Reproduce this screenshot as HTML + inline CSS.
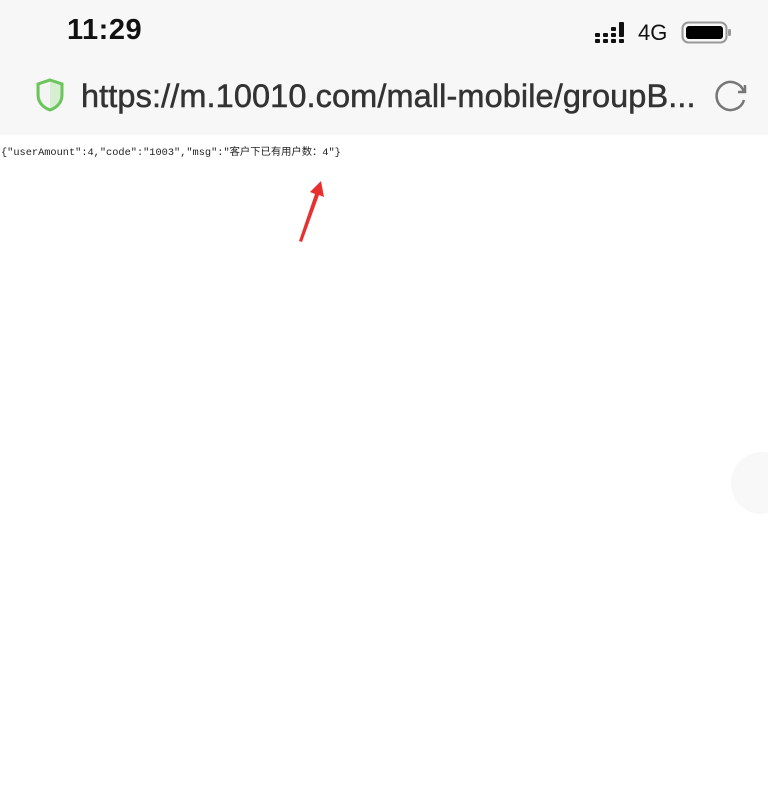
<!DOCTYPE html>
<html><head><meta charset="utf-8"><style>
body{margin:0;width:768px;height:807px;background:#fff;position:relative;overflow:hidden;font-family:"Liberation Sans",sans-serif}
.hdr{position:absolute;left:0;top:0;width:768px;height:135px;background:#f7f7f7}
.time{position:absolute;left:67px;top:14px;font-size:29px;font-weight:bold;color:#111;letter-spacing:0.5px}
.g4{position:absolute;left:638px;top:20px;font-size:22px;color:#111}
.url{position:absolute;left:81px;top:78px;font-size:32.5px;color:#333;letter-spacing:0.1px;-webkit-text-stroke:0.5px #333}
.json{position:absolute;left:1px;top:143px;font-family:"Liberation Mono","Noto Sans CJK SC",monospace;font-size:10.3px;color:#222;white-space:nowrap}
</style></head><body>
<div class="hdr">
<div class="time">11:29</div>
<svg style="position:absolute;left:595px;top:22px" width="36" height="22">
<g fill="#111"><rect x="0" y="11" width="5" height="4" rx="1"/><rect x="0" y="17" width="5" height="4" rx="1"/>
<rect x="8" y="11" width="5" height="4" rx="1"/><rect x="8" y="17" width="5" height="4" rx="1"/>
<rect x="16" y="5" width="5" height="4" rx="1"/><rect x="16" y="11" width="5" height="4" rx="1"/><rect x="16" y="17" width="5" height="4" rx="1"/>
<rect x="24" y="0" width="5" height="15" rx="1"/><rect x="24" y="17" width="5" height="4" rx="1"/></g></svg>
<div class="g4">4G</div>
<svg style="position:absolute;left:681px;top:21px" width="52" height="24">
<rect x="1.5" y="1.5" width="44" height="20" rx="6" fill="none" stroke="#999" stroke-width="2"/>
<rect x="5" y="5" width="37" height="13" rx="3" fill="#000"/>
<rect x="47" y="8" width="3" height="7" rx="1.5" fill="#999"/></svg>
<svg style="position:absolute;left:35px;top:78px" width="30" height="34">
<path d="M15 2 L27 6 L27 17 C27 25 21 30 15 32 C9 30 3 25 3 17 L3 6 Z" fill="#d6efd0" stroke="#6cc55c" stroke-width="3"/>
<path d="M15 4 L15 30 C9 28 5 23 5 17 L5 7 Z" fill="#f4f4f4"/></svg>
<div class="url">https://m.10010.com/mall-mobile/groupB...</div>
<svg style="position:absolute;left:714px;top:78px" width="36" height="36">
<path d="M30 14 A14 14 0 1 0 30 22" fill="none" stroke="#777" stroke-width="2.5"/>
<path d="M24 14 L31 14 L31 7" fill="none" stroke="#777" stroke-width="2.5"/></svg>
</div>
<div class="json">{"userAmount":4,"code":"1003","msg":"客户下已有用户数：4"}</div>
<svg style="position:absolute;left:290px;top:175px" width="40" height="70">
<path d="M9 66 L25 19 L20 17 L31 6 L34 22 L29 20 L12 67 Z" fill="#e8302e"/></svg>
<div style="position:absolute;left:731px;top:452px;width:60px;height:62px;border-radius:50%;background:#f8f8f8"></div>
</body></html>
